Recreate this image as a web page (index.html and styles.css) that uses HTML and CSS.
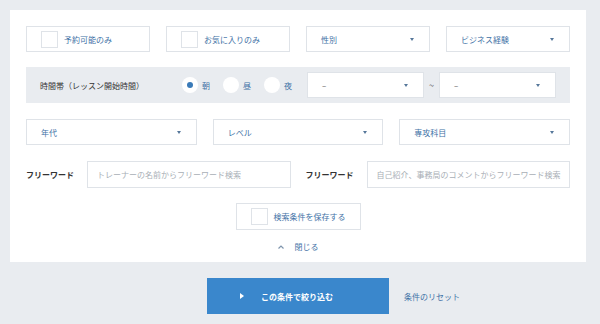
FILE: index.html
```html
<!DOCTYPE html>
<html lang="ja">
<head>
    <meta charset="UTF-8">
    <meta name="viewport" content="width=device-width, initial-scale=1.0">
    <title>トレーナー検索</title>
    <link rel="stylesheet" href="styles.css">
</head>
<body>
    <div class="panel">
        <div class="row-4">
            <label class="check-box"><span class="check"></span>予約可能のみ</label>
            <label class="check-box"><span class="check"></span>お気に入りのみ</label>
            <div class="select-box">性別<span class="arrow"></span></div>
            <div class="select-box">ビジネス経験<span class="arrow"></span></div>
        </div>

        <div class="time-band">
            <span class="time-label">時間帯（レッスン開始時間）</span>
            <div class="radios">
                <label class="radio"><span class="circle on"></span>朝</label>
                <label class="radio"><span class="circle"></span>昼</label>
                <label class="radio"><span class="circle"></span>夜</label>
            </div>
            <div class="time-range">
                <div class="select-box time-select">–<span class="arrow"></span></div>
                <span class="tilde">~</span>
                <div class="select-box time-select">–<span class="arrow"></span></div>
            </div>
        </div>

        <div class="row-3">
            <div class="select-box">年代<span class="arrow"></span></div>
            <div class="select-box">レベル<span class="arrow"></span></div>
            <div class="select-box">専攻科目<span class="arrow"></span></div>
        </div>

        <div class="row-2">
            <div class="word">
                <span class="word-label">フリーワード</span>
                <div class="word-input">トレーナーの名前からフリーワード検索</div>
            </div>
            <div class="word">
                <span class="word-label">フリーワード</span>
                <div class="word-input">自己紹介、事務局のコメントからフリーワード検索</div>
            </div>
        </div>

        <div class="save-row">
            <label class="check-box save-box"><span class="check"></span>検索条件を保存する</label>
        </div>

        <div class="close-row">
            <svg class="caret" width="6" height="4" viewBox="0 0 6 4"><path d="M0.5 3.5 L3 1 L5.5 3.5" fill="none" stroke="#7f95ad" stroke-width="1.2"/></svg>
            閉じる
        </div>
    </div>

    <div class="actions">
        <div></div>
        <button class="btn-search"><span class="play"></span>この条件で絞り込む</button>
        <a class="reset" href="#">条件のリセット</a>
    </div>
</body>
</html>
```

FILE: styles.css
```css
body {
    font-family: "Noto Sans CJK JP", "Noto Sans", sans-serif;
    font-size: 8px;
    margin: 0;
    padding: 10px 0 0 10px;
    background: #e9ecf0;
    color: #333;
}

.panel {
    width: 544px;
    padding: 16px 16px 10px;
    background: #fff;
}

.row-4 {
    display: grid;
    grid-template-columns: repeat(4, 1fr);
    gap: 16px;
}

.row-3 {
    display: grid;
    grid-template-columns: repeat(3, 1fr);
    gap: 16px;
    margin-top: 16px;
}

.check-box, .select-box {
    display: flex;
    align-items: center;
    height: 26px;
    box-sizing: border-box;
    border: 1px solid #dfe3e8;
    background: #fff;
    color: #3f72a6;
}

.check-box {
    padding-left: 14px;
}

.check {
    width: 17px;
    height: 17px;
    box-sizing: border-box;
    border: 1px solid #dfe3e8;
    margin-right: 6px;
}

.select-box {
    position: relative;
    padding-left: 14px;
}

.arrow {
    position: absolute;
    right: 15px;
    top: 11px;
    border-left: 2.5px solid transparent;
    border-right: 2.5px solid transparent;
    border-top: 3px solid #56779a;
}

.time-band {
    display: flex;
    align-items: center;
    height: 36px;
    margin-top: 15px;
    padding: 0 14px;
    background: #e9ecf0;
}

.time-label {
    width: 142px;
}

.radios {
    display: flex;
    gap: 13px;
}

.radio {
    display: flex;
    align-items: center;
    color: #3f72a6;
}

.circle {
    position: relative;
    width: 16px;
    height: 16px;
    border-radius: 50%;
    background: #fff;
    margin-right: 4px;
}

.circle.on::after {
    content: "";
    position: absolute;
    left: 5px;
    top: 5px;
    width: 6px;
    height: 6px;
    border-radius: 50%;
    background: #3a7ab8;
}

.time-range {
    display: flex;
    align-items: center;
    margin-left: auto;
}

.time-select {
    width: 117px;
    color: #555;
}

.tilde {
    width: 15px;
    text-align: center;
    color: #555;
    font-size: 9px;
}

.row-2 {
    display: grid;
    grid-template-columns: 1fr 1fr;
    gap: 15px;
    margin-top: 16px;
}

.word {
    display: flex;
    align-items: center;
}

.word-label {
    width: 61px;
    font-weight: bold;
}

.word-input {
    flex: 1;
    display: flex;
    align-items: center;
    height: 27px;
    box-sizing: border-box;
    padding-left: 9px;
    border: 1px solid #dfe3e8;
    color: #a9afb6;
    white-space: nowrap;
    overflow: hidden;
}

.save-row {
    display: flex;
    justify-content: center;
    margin-top: 15px;
}

.save-box {
    width: 125px;
    height: 27px;
}

.close-row {
    display: flex;
    justify-content: center;
    align-items: center;
    gap: 11px;
    margin-top: 11px;
    color: #3f72a6;
}

.actions {
    display: grid;
    grid-template-columns: 1fr auto 1fr;
    align-items: center;
    width: 576px;
    margin-top: 16px;
}

.btn-search {
    display: flex;
    align-items: center;
    width: 182px;
    height: 36px;
    padding-left: 33px;
    border: none;
    background: #3a87cc;
    color: #fff;
    font-family: inherit;
    font-size: 8px;
    font-weight: bold;
    cursor: pointer;
}

.play {
    border-top: 3px solid transparent;
    border-bottom: 3px solid transparent;
    border-left: 4px solid #fff;
    margin-right: 17px;
}

.reset {
    padding-left: 15px;
    color: #3f72a6;
    text-decoration: none;
}
```
